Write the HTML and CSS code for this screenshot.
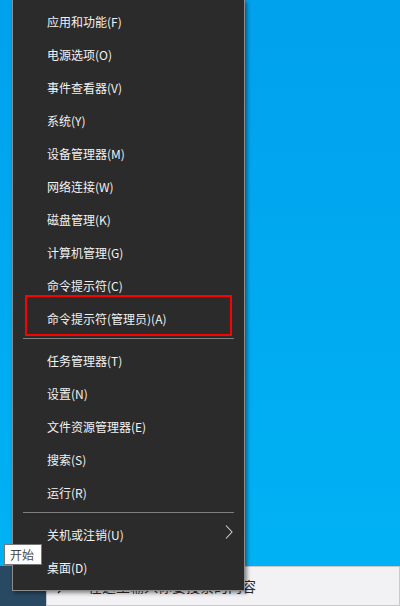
FILE: index.html
```html
<!DOCTYPE html>
<html lang="zh-CN">
<head>
	<meta charset="UTF-8">
	<title>开始菜单</title>
	<link rel="stylesheet" href="styles.css">
</head>
<body>
	<div class="screen">
		<div class="desktop"></div>

		<div class="taskbar">
			<div class="start"></div>
			<div class="search">
				<svg class="search-icon" width="16" height="16" viewBox="0 0 16 16">
					<circle cx="9.5" cy="6.5" r="5" fill="none" stroke="#222" stroke-width="1.2"/>
					<line x1="6" y1="10" x2="1" y2="15" stroke="#222" stroke-width="1.2"/>
				</svg>
				<span class="search-text">在这里输入你要搜索的内容</span>
			</div>
			<div class="tray"></div>
		</div>

		<!-- Win+X 菜单 -->
		<div class="menu">
			<ul>
				<li>应用和功能(F)</li>
				<li>电源选项(O)</li>
				<li>事件查看器(V)</li>
				<li>系统(Y)</li>
				<li>设备管理器(M)</li>
				<li>网络连接(W)</li>
				<li>磁盘管理(K)</li>
				<li>计算机管理(G)</li>
				<li>命令提示符(C)</li>
				<li>命令提示符(管理员)(A)</li>
			</ul>
			<div class="sep"></div>
			<ul>
				<li>任务管理器(T)</li>
				<li>设置(N)</li>
				<li>文件资源管理器(E)</li>
				<li>搜索(S)</li>
				<li>运行(R)</li>
			</ul>
			<div class="sep"></div>
			<ul>
				<li class="sub">关机或注销(U)
					<svg class="chevron" width="8" height="14" viewBox="0 0 8 14">
						<polyline points="1,0.5 7,7 1,13.5" fill="none" stroke="#cfcfcf" stroke-width="1.1"/>
					</svg>
				</li>
				<li>桌面(D)</li>
			</ul>
			<div class="mark"></div>
		</div>

		<div class="tip">开始</div>
	</div>
</body>
</html>
```

FILE: styles.css
```css
/*common*/
*{
	margin: 0;
	padding: 0;
}
body{
	font-family: "Microsoft YaHei", "Noto Sans CJK SC", "Noto Sans", sans-serif;
	font-size: 12px;
}
.screen{
	width: 400px;
	height: 606px;
	position: relative;
	overflow: hidden;
}
.desktop{
	height: 566px;
	background: linear-gradient(to bottom, #00a1ed, #00b2f4);
}

/*taskbar*/
.taskbar{
	height: 40px;
	display: flex;
}
.taskbar .start{
	width: 46px;
	background-color: #284961;
}
.taskbar .search{
	width: 342px;
	background-color: #f2f2f4;
	border: 1px solid #c9c9cc;
	display: flex;
	align-items: center;
	padding-left: 10px;
	color: #2b2b2b;
	font-size: 14px;
}
.search .search-icon{
	margin-right: 15px;
}
.taskbar .tray{
	flex: 1;
	background-color: #0f3a58;
}

/*menu*/
.menu{
	position: absolute;
	left: 12px;
	top: 0;
	width: 231px;
	padding: 5px 0 6px;
	background-color: #2b2b2b;
	border: 1px solid #8c8c8c;
	border-top: none;
	box-shadow: 2px 2px 4px rgba(0, 0, 0, 0.45);
	color: #f2f2f2;
}
.menu ul{
	list-style: none;
}
.menu li{
	height: 33px;
	line-height: 33px;
	padding-left: 34px;
	position: relative;
}
.menu .sep{
	height: 1px;
	margin: 3px 10px 5px;
	background-color: #7f7f7f;
}
.menu .chevron{
	position: absolute;
	right: 11px;
	top: 7px;
}
.menu .mark{
	position: absolute;
	left: 12px;
	top: 295px;
	width: 203px;
	height: 37px;
	border: 2px solid #ff0000;
}

/*tooltip*/
.tip{
	position: absolute;
	left: 4px;
	top: 544px;
	width: 31px;
	height: 19px;
	line-height: 19px;
	padding-left: 5px;
	background-color: #fff;
	border: 1px solid #767676;
	color: #4a4a4a;
}
```
